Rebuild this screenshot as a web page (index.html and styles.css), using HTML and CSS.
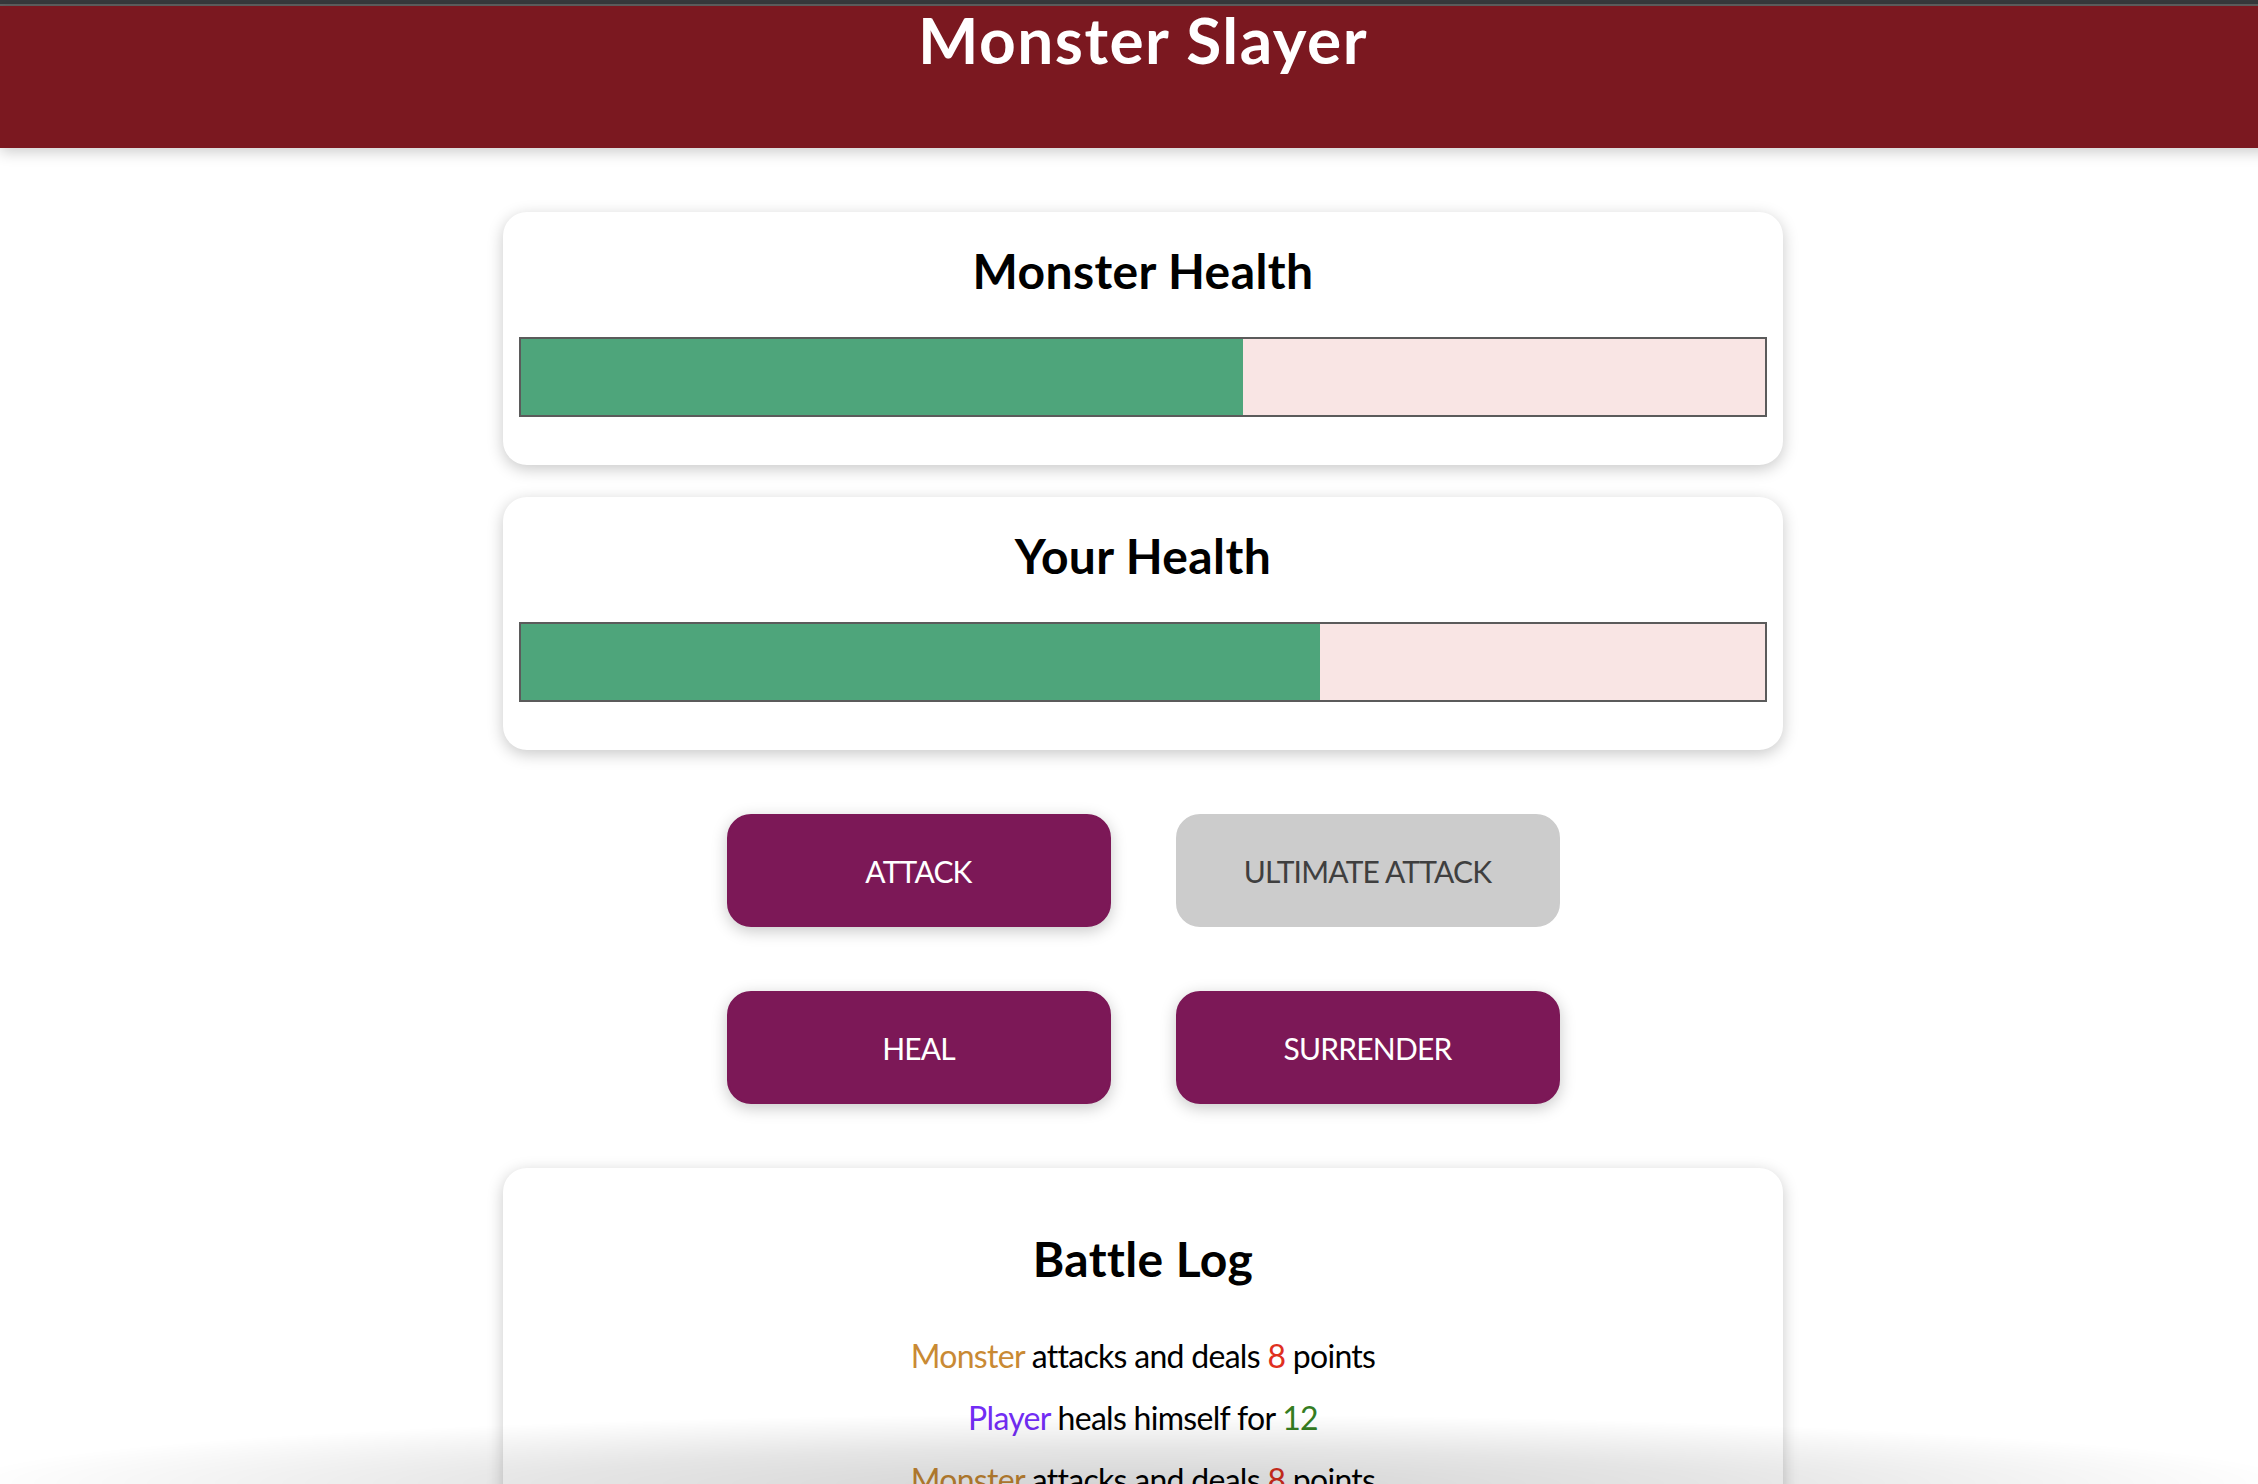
FILE: index.html
```html
<!DOCTYPE html>
<html lang="en">
<head>
<meta charset="utf-8">
<title>Monster Slayer</title>
<link rel="stylesheet" href="styles.css">
</head>
<body>
<div class="chrome"></div>
<header class="site-header">
  <h1 class="title">Monster Slayer</h1>
</header>
<main class="game">
  <section class="card">
    <h2 class="card-title">Monster Health</h2>
    <div class="healthbar"><div class="healthbar-value" style="width: 58%"></div></div>
  </section>
  <section class="card">
    <h2 class="card-title">Your Health</h2>
    <div class="healthbar"><div class="healthbar-value" style="width: 64.2%"></div></div>
  </section>
  <section class="controls">
    <button class="btn">ATTACK</button>
    <button class="btn" disabled>ULTIMATE ATTACK</button>
    <button class="btn">HEAL</button>
    <button class="btn">SURRENDER</button>
  </section>
  <section class="card log">
    <h2 class="card-title log-title">Battle Log</h2>
    <ul class="log-list">
      <li><span class="log-monster">Monster</span> attacks and deals <span class="log-damage">8</span> points</li>
      <li><span class="log-player">Player</span> heals himself for <span class="log-heal">12</span></li>
      <li><span class="log-monster">Monster</span> attacks and deals <span class="log-damage">8</span> points</li>
    </ul>
  </section>
</main>
<div class="vignette"></div>
</body>
</html>
```

FILE: styles.css
```css
* { box-sizing: border-box; }

html {
  margin: 0;
  padding: 0;
  background: #ffffff;
  overflow: hidden;
}

body {
  margin: 0;
  padding: 0;
  width: 2286px;
  height: 1484px;
  overflow: hidden;
  background: #ffffff;
  font-family: "Lato", "Open Sans", sans-serif;
  color: #000;
}

.chrome {
  height: 6px;
  background: #37393c;
  border-bottom: 2px solid #5f5f5f;
}

.site-header {
  height: 142px;
  background: #7b1820;
  color: #fff;
  text-align: center;
  box-shadow: 0 4px 14px rgba(0, 0, 0, 0.2);
  position: relative;
  z-index: 1;
}

.title {
  margin: 0;
  font-size: 64px;
  line-height: 68px;
  font-weight: 700;
  letter-spacing: 1.5px;
}

.game {
  width: 1280px;
  margin: 64px auto 0;
}

.card {
  background: #fff;
  text-align: center;
  padding: 16px;
  margin: 0 0 32px;
  border-radius: 24px;
  box-shadow: 0 4px 16px rgba(0, 0, 0, 0.22);
}

.card-title {
  margin: 8px 0 32px;
  font-size: 48px;
  line-height: 69px;
  font-weight: 700;
  letter-spacing: 0.4px;
}

.healthbar {
  height: 80px;
  margin: 0 0 32px;
  border: 2px solid #5b5b5b;
  background: #f9e5e4;
}

.healthbar-value {
  height: 100%;
  background: #4ea57b;
}

.controls {
  display: grid;
  grid-template-columns: 384px 384px;
  justify-content: center;
  column-gap: 65px;
  row-gap: 64px;
  padding: 32px 0;
  margin-bottom: 32px;
}

.btn {
  height: 113px;
  font: inherit;
  font-size: 30px;
  letter-spacing: -0.8px;
  border: 2px solid #7c1857;
  background: #7c1857;
  color: #fff;
  border-radius: 24px;
  box-shadow: 0 4px 16px rgba(0, 0, 0, 0.22);
  cursor: pointer;
}

.btn:disabled {
  background: #cccccc;
  border-color: #cccccc;
  color: #3f3f3f;
  box-shadow: none;
}

.log {
  padding-top: 56px;
  padding-bottom: 40px;
}

.log-title {
  margin: 0 0 40px;
}

.log-list {
  list-style: none;
  margin: 0;
  padding: 0;
  font-size: 32px;
  line-height: 46px;
  letter-spacing: -0.7px;
}

.log-list li {
  margin: 0 0 16px;
}

.log-monster { color: #c98a34; }
.log-player { color: #722df5; }
.log-damage { color: #e0301f; }
.log-heal { color: #357d22; }

.vignette {
  position: fixed;
  left: 0;
  right: 0;
  bottom: 0;
  height: 70px;
  pointer-events: none;
  background: radial-gradient(ellipse 52% 100% at 50% 100%, rgba(0, 0, 0, 0.17) 0%, rgba(0, 0, 0, 0.1) 50%, rgba(0, 0, 0, 0) 100%);
}
```
